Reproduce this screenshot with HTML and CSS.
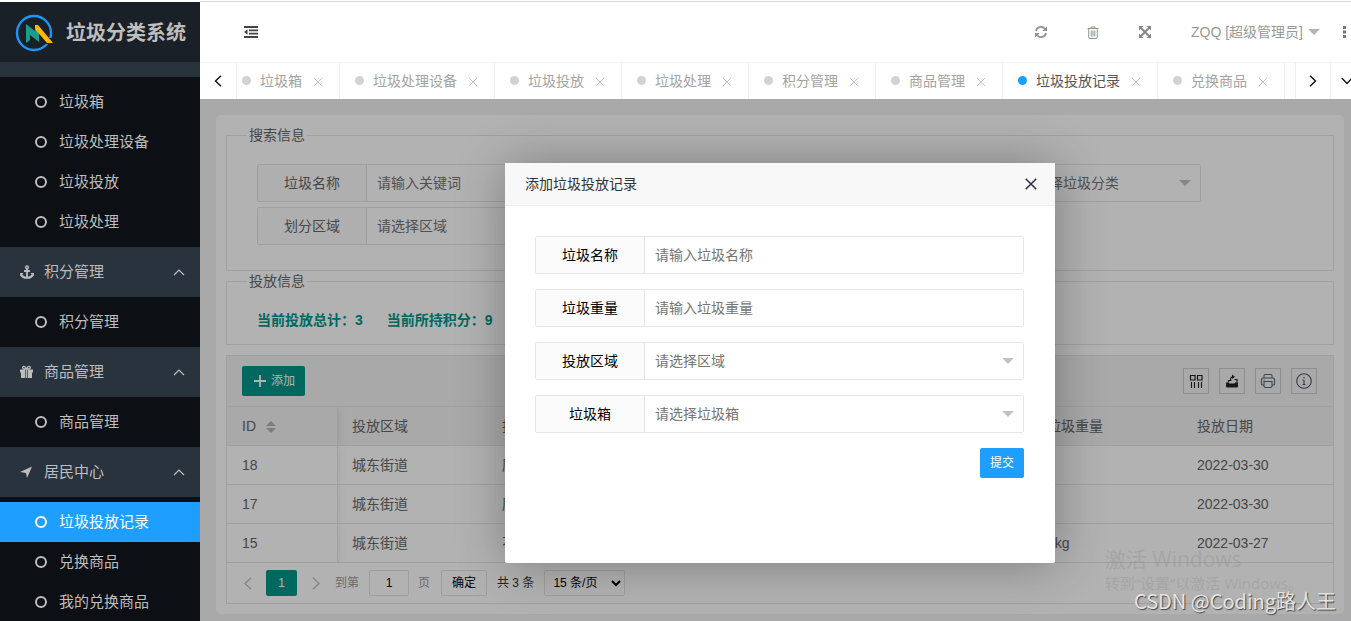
FILE: index.html
```html
<!DOCTYPE html>
<html lang="zh-CN">
<head>
<meta charset="utf-8">
<title>垃圾分类系统</title>
<link rel="stylesheet" href="styles.css">
</head>
<body>
<div class="app">
  <aside class="sidebar">
    <div class="brand">
      <svg class="brand-logo" width="40" height="40" viewBox="0 0 40 40" aria-hidden="true">
        <circle cx="19" cy="20" r="17" fill="none" stroke="#1e96f5" stroke-width="2.400"/>
        <path d="M31 25l6 0 3 6H29z" fill="#1a2027"/>
        <path d="M11 11l9 7v-6l4 4v13L15 22v5l-4 3z" fill="#1a9e8c"/>
        <path d="M20 12h3l15 18h-6L20 16z" fill="#ffb800"/>
      </svg>
      <h1 class="brand-name">垃圾分类系统</h1>
    </div>
    <nav class="menu">
      <div class="menu-cap"></div>
      <ul class="submenu">
        <li><a href="#"><i class="ring"></i>垃圾箱</a></li>
        <li><a href="#"><i class="ring"></i>垃圾处理设备</a></li>
        <li><a href="#"><i class="ring"></i>垃圾投放</a></li>
        <li><a href="#"><i class="ring"></i>垃圾处理</a></li>
      </ul>
      <button class="menu-group" type="button">
        <svg width="14" height="14" viewBox="0 0 14 14" aria-hidden="true"><g fill="none" stroke="currentColor"><circle cx="7" cy="2.3" r="1.4" stroke-width="1.4"/><path d="M7 4v8M4 6h6" stroke-width="1.8"/><path d="M1.2 9.5c1 2.4 3 3.3 5.800 3.300s4.800-.9 5.800-3.300" stroke-width="2"/></g><path d="M0 8l3.500 0L.5 11.500zM14 8l-3.500 0 3 3.500z" fill="currentColor"/></svg>
        <span>积分管理</span>
        <svg class="chev" width="12" height="7" viewBox="0 0 12 7" aria-hidden="true"><path d="M1 6l5-5 5 5" fill="none" stroke="currentColor" stroke-width="1.200"/></svg>
      </button>
      <ul class="submenu">
        <li><a href="#"><i class="ring"></i>积分管理</a></li>
      </ul>
      <button class="menu-group" type="button">
        <svg width="14" height="14" viewBox="0 0 14 14" aria-hidden="true"><path d="M0 4.500h5.200v3H0zM7.800 4.500H13v3H7.800zM1 7h4.200v6H1zM7.800 7H12v6H7.800zM5.900 4.500h1.200V13H5.900z" fill="currentColor"/><path d="M6.300 4C5.500 1.500 4.500 1.200 3.600 1.400c-1.400.4-1.200 2.400.3 2.600zM6.700 4c.8-2.500 1.800-2.800 2.700-2.600 1.400.4 1.200 2.400-.3 2.600z" fill="none" stroke="currentColor" stroke-width="1.300"/></svg>
        <span>商品管理</span>
        <svg class="chev" width="12" height="7" viewBox="0 0 12 7" aria-hidden="true"><path d="M1 6l5-5 5 5" fill="none" stroke="currentColor" stroke-width="1.200"/></svg>
      </button>
      <ul class="submenu">
        <li><a href="#"><i class="ring"></i>商品管理</a></li>
      </ul>
      <button class="menu-group" type="button">
        <svg width="14" height="14" viewBox="0 0 14 14" aria-hidden="true"><path d="M12 1.500L7 13 6 8 0 7z" fill="currentColor"/></svg>
        <span>居民中心</span>
        <svg class="chev" width="12" height="7" viewBox="0 0 12 7" aria-hidden="true"><path d="M1 6l5-5 5 5" fill="none" stroke="currentColor" stroke-width="1.200"/></svg>
      </button>
      <ul class="submenu">
        <li class="current"><a href="#"><i class="ring"></i>垃圾投放记录</a></li>
        <li><a href="#"><i class="ring"></i>兑换商品</a></li>
        <li><a href="#"><i class="ring"></i>我的兑换商品</a></li>
      </ul>
    </nav>
  </aside>

  <div class="main">
    <header class="topbar">
      <button class="icon-btn fold" type="button" aria-label="折叠菜单">
        <svg width="14" height="12" viewBox="0 0 14 12"><path d="M0 0h14v2H0zM5 3.500h9v1.700H5zM5 6.800h9v1.700H5zM0 10h14v2H0zM3.500 3.300v5.400L0 6z" fill="#444"/></svg>
      </button>
      <div class="tools">
        <button class="icon-btn" type="button" aria-label="刷新">
          <svg width="12" height="12" viewBox="0 0 12 12"><g fill="none" stroke="#8f8f8f" stroke-width="1.800"><path d="M1 5a5 5 0 0 1 8.800-2.200"/><path d="M11 7a5 5 0 0 1-8.800 2.200"/></g><path d="M12 .3V5H7.300zM0 11.700V7h4.700z" fill="#8f8f8f"/></svg>
        </button>
        <button class="icon-btn" type="button" aria-label="清除">
          <svg width="12" height="13" viewBox="0 0 12 13"><g fill="none" stroke="#8a9a8a" stroke-width="1"><path d="M.5 2.500h11M4 2.500v-1.500h4v1.500M1.700 2.500v8.500q0 1.500 1.300 1.500h6q1.300 0 1.300-1.500V2.500M4.200 4.500v6M6 4.500v6M7.800 4.500v6"/></g></svg>
        </button>
        <button class="icon-btn" type="button" aria-label="全屏">
          <svg width="12" height="12" viewBox="0 0 12 12"><path d="M0 0h4.500L0 4.500zM12 0v4.500L7.500 0zM0 12V7.500L4.500 12zM12 12H7.500L12 7.500z" fill="#888"/><path d="M1.500 1.500l9 9M10.500 1.500l-9 9" stroke="#888" stroke-width="2"/></svg>
        </button>
        <button class="user" type="button">ZQQ [超级管理员]<i class="caret"></i></button>
        <button class="icon-btn more" type="button" aria-label="更多">
          <svg width="3" height="12" viewBox="0 0 3 12"><path d="M0 0h3v3H0zM0 4.500h3v3H0zM0 9h3v3H0z" fill="#777"/></svg>
        </button>
      </div>
    </header>

    <div class="tabbar">
      <button class="tab-nav first" type="button" aria-label="向左"><svg width="8" height="12" viewBox="0 0 8 12"><path d="M7 .7L1.500 6 7 11.300" fill="none" stroke="#111" stroke-width="1.400"/></svg></button>
      <ul class="tabs">
        <li><i class="dot"></i><a href="#">垃圾箱</a><button class="tab-x" type="button" aria-label="关闭"></button></li>
        <li><i class="dot"></i><a href="#">垃圾处理设备</a><button class="tab-x" type="button" aria-label="关闭"></button></li>
        <li><i class="dot"></i><a href="#">垃圾投放</a><button class="tab-x" type="button" aria-label="关闭"></button></li>
        <li><i class="dot"></i><a href="#">垃圾处理</a><button class="tab-x" type="button" aria-label="关闭"></button></li>
        <li><i class="dot"></i><a href="#">积分管理</a><button class="tab-x" type="button" aria-label="关闭"></button></li>
        <li><i class="dot"></i><a href="#">商品管理</a><button class="tab-x" type="button" aria-label="关闭"></button></li>
        <li class="on"><i class="dot"></i><a href="#">垃圾投放记录</a><button class="tab-x" type="button" aria-label="关闭"></button></li>
        <li><i class="dot"></i><a href="#">兑换商品</a><button class="tab-x" type="button" aria-label="关闭"></button></li>
      </ul>
      <button class="tab-nav" type="button" aria-label="向右"><svg width="8" height="12" viewBox="0 0 8 12"><path d="M1 .7L6.500 6 1 11.300" fill="none" stroke="#111" stroke-width="1.400"/></svg></button>
      <button class="tab-nav last" type="button" aria-label="展开"><svg width="12" height="8" viewBox="0 0 12 8"><path d="M.7 1L6 6.500 11.300 1" fill="none" stroke="#111" stroke-width="1.400"/></svg></button>
    </div>

    <div class="frame">
      <main class="card">
        <fieldset class="panel">
          <legend>搜索信息</legend>
          <form class="search">
            <div class="field"><label for="s-name">垃圾名称</label><input id="s-name" type="text" placeholder="请输入关键词"></div>
            <div class="field"><input type="text" aria-label="用户"></div>
            <div class="field pick"><label for="s-type">垃圾分类</label><select id="s-type"><option>请选择垃圾分类</option></select></div>
            <div class="field pick"><label for="s-area">划分区域</label><select id="s-area"><option>请选择区域</option></select></div>
          </form>
        </fieldset>
        <fieldset class="panel stats">
          <legend>投放信息</legend>
          <p><b>当前投放总计：3</b><b>当前所持积分：9</b></p>
        </fieldset>

        <section class="grid-view">
          <div class="grid-tools">
            <button class="add" type="button"><svg width="12" height="12" viewBox="0 0 12 12" aria-hidden="true"><path d="M6 0v12M0 6h12" stroke="#fff" stroke-width="1.800"/></svg>添加</button>
            <div class="grid-icons">
              <button type="button" aria-label="筛选列"><svg width="16" height="16" viewBox="0 0 16 16"><g fill="none" stroke="#222"><path d="M2.500 2.500h4.500v4.500H2.500zM9.500 2.500h4.500v4.500H9.500z" stroke-width="1.200"/><path d="M3.500 9v6M6.500 9v6M10.500 9v6M13.500 9v6" stroke-width="1.100"/></g></svg></button>
              <button type="button" aria-label="导出"><svg width="16" height="16" viewBox="0 0 16 16"><path d="M2 9.500h2l1.500 1H10l1.500-1H14v4q0 1-1 1H3q-1 0-1-1z" fill="#222"/><path d="M4.500 9.500V7.500h3M6.500 7c0-2.500.5-3 2.500-3.200M10.500 6.500h2.500v3" fill="none" stroke="#222" stroke-width="1.200"/><path d="M8 1.500L11 3.800 8 6z" fill="#222"/></svg></button>
              <button type="button" aria-label="打印"><svg width="16" height="16" viewBox="0 0 16 16"><g fill="none" stroke="#567" stroke-width="1.100"><path d="M4 5V2.500Q4 1.500 5 1.500h6q1 0 1 1V5M4 12H2.500q-1 0-1-1V6.500Q1.500 5 3 5h10q1.500 0 1.500 1.500V11q0 1-1 1H12M4 8.500h8V13q0 1.500-1.500 1.500h-5Q4 14.500 4 13zM3.500 7h1"/></g></svg></button>
              <button type="button" aria-label="说明"><svg width="16" height="16" viewBox="0 0 16 16"><circle cx="8" cy="8" r="7.300" fill="none" stroke="#556" stroke-width="1.100"/><path d="M8 4v1.500M8 7v4.500M6.700 7.200H8M6.500 11.500h3" stroke="#556" stroke-width="1.100"/></svg></button>
            </div>
          </div>
          <table>
            <colgroup><col class="c-id"><col class="c-std"><col class="c-std"><col><col class="c-std"><col class="c-std"></colgroup>
            <thead><tr><th>ID<span class="sort"><i class="up"></i><i class="down"></i></span></th><th>投放区域</th><th>投放垃圾</th><th></th><th>垃圾重量</th><th>投放日期</th></tr></thead>
            <tbody>
              <tr><td>18</td><td>城东街道</td><td>厨余垃圾</td><td></td><td>1</td><td>2022-03-30</td></tr>
              <tr><td>17</td><td>城东街道</td><td>厨余垃圾</td><td></td><td>1</td><td>2022-03-30</td></tr>
              <tr><td>15</td><td>城东街道</td><td>不可回收</td><td></td><td>1kg</td><td>2022-03-27</td></tr>
            </tbody>
          </table>
          <div class="pager">
            <button class="pg" type="button" aria-label="上一页"><svg width="8" height="13" viewBox="0 0 8 13"><path d="M7 .7L1 6.500l6 5.800" fill="none" stroke="#c2c2c2" stroke-width="1.500"/></svg></button>
            <button class="pg cur" type="button">1</button>
            <button class="pg" type="button" aria-label="下一页"><svg width="8" height="13" viewBox="0 0 8 13"><path d="M1 .7l6 5.800-6 5.800" fill="none" stroke="#c2c2c2" stroke-width="1.500"/></svg></button>
            <label class="pg-text" for="pg-no">到第</label><input id="pg-no" type="text" value="1"><span class="pg-text">页</span>
            <button class="go" type="button">确定</button>
            <span class="total">共 3 条</span>
            <select aria-label="每页条数"><option>15 条/页</option></select>
          </div>
        </section>
      </main>

      <div class="shade">
        <div class="dialog" role="dialog" aria-labelledby="dlg-title">
          <div class="dialog-head">
            <h2 id="dlg-title">添加垃圾投放记录</h2>
            <button class="dialog-x" type="button" aria-label="关闭"><svg width="12" height="12" viewBox="0 0 12 12"><path d="M.7.7l10.600 10.600M11.300.7L.7 11.300" stroke="#2e2d3c" stroke-width="1.500"/></svg></button>
          </div>
          <form class="dialog-form">
            <div class="field"><label for="d-name">垃圾名称</label><input id="d-name" type="text" placeholder="请输入垃圾名称"></div>
            <div class="field"><label for="d-weight">垃圾重量</label><input id="d-weight" type="text" placeholder="请输入垃圾重量"></div>
            <div class="field pick"><label for="d-area">投放区域</label><select id="d-area"><option>请选择区域</option></select></div>
            <div class="field pick"><label for="d-bin">垃圾箱</label><select id="d-bin"><option>请选择垃圾箱</option></select></div>
            <button class="submit" type="button">提交</button>
          </form>
        </div>
      </div>
    </div>
  </div>
</div>
<div class="activate"><p class="activate-title">激活 Windows</p><p>转到“设置”以激活 Windows。</p></div>
<div class="credit">CSDN @Coding路人王</div>
</body>
</html>
```
FILE: styles.css
```css
* { box-sizing: border-box; }
html, body { height: 100%; }
body, h1, h2, p, ul, fieldset { margin: 0; padding: 0; }
body {
  overflow: hidden;
  background: #fff;
  color: #666;
  font: 14px/24px "Liberation Sans", "Noto Sans CJK SC", sans-serif;
}
ul { list-style: none; }
a { color: inherit; text-decoration: none; }
button, input, select { font: inherit; color: inherit; }
button { border: 0; padding: 0; background: none; cursor: pointer; }
svg { display: block; flex: none; }

.app {
  display: flex;
  height: 100vh;
  padding-top: 1px;
}

/* Sidebar */
.sidebar {
  flex: none;
  width: 200px;
  margin-top: 1px;
  overflow: hidden;
  background: #0c0f13;
  color: #bebebe;
}
.brand {
  display: flex;
  align-items: center;
  gap: 11px;
  height: 60px;
  padding: 2px 0 0 15px;
  background: #1a2027;
}
.brand-name { font-size: 20px; line-height: 30px; white-space: nowrap; }
.menu-cap { height: 15px; background: #28333e; }
.submenu { padding: 5px 0; background: #0c0f13; }
.submenu a {
  display: flex;
  align-items: center;
  gap: 12px;
  height: 40px;
  padding-left: 35px;
  font-size: 15px;
}
.ring {
  width: 12px;
  height: 12px;
  border: 2px solid currentColor;
  border-radius: 50%;
}
.current { background: #1e9fff; color: #fff; }
.menu-group {
  display: flex;
  align-items: center;
  gap: 10px;
  width: 100%;
  height: 50px;
  padding: 0 15px 0 20px;
  background: #28333e;
  font-size: 15px;
}
.chev { margin-left: auto; }

/* Top bar */
.main {
  flex: 1;
  min-width: 0;
  display: flex;
  flex-direction: column;
  border-top: 1px solid #d5dbda;
}
.topbar {
  display: flex;
  align-items: center;
  justify-content: space-between;
  height: 60px;
  padding-left: 44px;
}
.tools { display: flex; align-items: center; gap: 40px; color: #999; }
.user { display: flex; align-items: center; gap: 5px; margin-right: -17px; white-space: nowrap; }
.caret { border: 6px solid transparent; border-top-color: #b5b5b5; border-bottom: 0; }
.more { margin-right: 5px; }

/* Tab bar */
.tabbar {
  display: flex;
  height: 37px;
  border-top: 1px solid #f3f3f3;
}
.tab-nav {
  flex: none;
  display: flex;
  align-items: center;
  justify-content: center;
  width: 35px;
  padding-bottom: 1px;
  border-left: 1px solid #f0f0f0;
}
.tab-nav.first { width: 37px; border-left: 0; border-right: 1px solid #f0f0f0; }
.tab-nav.last { width: 21px; justify-content: flex-start; overflow: hidden; padding-left: 10px; }
.tabs { flex: 1; display: flex; min-width: 0; overflow: hidden; color: #a3a3a3; }
.tabs li {
  flex: none;
  display: flex;
  align-items: center;
  padding: 0 17px 1px 15px;
  border-right: 1px solid #f0f0f0;
}
.tabs li:first-child { margin-left: -10px; }
.dot { width: 9px; height: 9px; margin-right: 9px; border-radius: 50%; background: #d2d2d2; }
.tab-x {
  width: 8px;
  height: 8px;
  margin: 2px 0 0 12px;
  background:
    linear-gradient(45deg, transparent 45%, #c4c4c4 45%, #c4c4c4 55%, transparent 55%),
    linear-gradient(-45deg, transparent 45%, #c4c4c4 45%, #c4c4c4 55%, transparent 55%);
}
.on { color: #555; }
.on .dot { background: #1e9fff; }

/* Page body */
.frame {
  position: relative;
  flex: 1;
  overflow: hidden;
  padding: 16px 7px 8px 16px;
  background: #f2f2f2;
}
.card { padding: 10px; border-radius: 5px; background: #fff; }
.panel { min-width: 0; padding: 19px 10px 25px 30px; border: 1px solid #e6e6e6; }
.panel legend { margin-left: -10px; padding: 0 2px; line-height: 20px; }
.stats { padding: 17px 10px 12px 30px; }
.stats p { display: flex; gap: 24px; color: #009688; }
.search { display: flex; flex-wrap: wrap; gap: 5px 22px; }
.search .field { width: 300px; }

.field {
  position: relative;
  display: flex;
  height: 38px;
  border: 1px solid #e6e6e6;
  border-radius: 2px;
}
.field label {
  flex: none;
  width: 109px;
  border-right: 1px solid #e6e6e6;
  background: #fbfbfb;
  line-height: 36px;
  text-align: center;
}
.field input, .field select {
  flex: 1;
  min-width: 0;
  padding: 0 10px;
  border: 0;
  background: #fff;
  color: #757575;
  appearance: none;
}
.field input::placeholder { color: #757575; }
.pick::after {
  content: "";
  position: absolute;
  right: 9px;
  top: 15px;
  border: 6px solid transparent;
  border-top-color: #c2c2c2;
  border-bottom: 0;
  pointer-events: none;
}

/* Data grid */
.grid-view { margin-top: 10px; border: 1px solid #e6e6e6; }
.grid-tools {
  display: flex;
  align-items: center;
  justify-content: space-between;
  height: 51px;
  padding: 0 16px 0 15px;
  border-bottom: 1px solid #e6e6e6;
  background: #f2f2f2;
}
.add {
  display: flex;
  align-items: center;
  gap: 5px;
  height: 30px;
  padding: 0 10px 0 12px;
  border-radius: 2px;
  background: #009688;
  color: #fff;
  font-size: 12px;
}
.grid-icons { display: flex; gap: 10px; }
.grid-icons button {
  display: flex;
  align-items: center;
  justify-content: center;
  width: 26px;
  height: 26px;
  border: 1px solid #ccc;
}
table { width: 100%; border-collapse: separate; border-spacing: 0; table-layout: fixed; }
.c-id { width: 111px; }
.c-std { width: 150px; }
th, td {
  height: 39px;
  padding: 0 14px;
  border-bottom: 1px solid #e6e6e6;
  font-weight: 400;
  text-align: left;
  white-space: nowrap;
}
th { background: #f2f2f2; }
th:first-child, td:first-child {
  padding-left: 15px;
  border-right: 1px solid #e6e6e6;
  box-shadow: 1px 0 8px rgba(0, 0, 0, .08);
  clip-path: inset(0 -9px 0 0);
}
.sort { display: inline-flex; flex-direction: column; gap: 2px; margin-left: 10px; vertical-align: middle; }
.sort i { border: 5px solid transparent; }
.sort .up { border-top: 0; border-bottom-color: #b2b2b2; }
.sort .down { border-bottom: 0; border-top-color: #b2b2b2; }

.pager {
  display: flex;
  align-items: center;
  height: 40px;
  padding-left: 10px;
  color: #333;
  font-size: 12px;
}
.pg { display: flex; align-items: center; justify-content: center; width: 21px; height: 26px; }
.cur { width: 31px; margin: 0 8px; border-radius: 2px; background: #009688; color: #fff; }
.pg-text { margin-left: 9px; color: #999; }
.pager input {
  width: 40px;
  height: 26px;
  margin-left: 10px;
  border: 1px solid #e2e2e2;
  border-radius: 2px;
  background: #fff;
  color: #000;
  text-align: center;
}
.go { width: 46px; height: 26px; margin: 0 10px 0 11px; border: 1px solid #e2e2e2; border-radius: 2px; color: #000; }
.pager select {
  width: 81px;
  height: 26px;
  margin-left: 10px;
  padding-left: 4px;
  border: 1px solid #e2e2e2;
  border-radius: 2px;
  background: #fff;
  color: #000;
}

/* Dialog */
.shade {
  position: absolute;
  inset: 0;
  display: grid;
  place-items: center;
  padding: 6px 0 0 9px;
  background: rgba(0, 0, 0, .3);
}
.dialog {
  width: 550px;
  min-height: 400px;
  border-radius: 2px;
  background: #fff;
  box-shadow: 1px 1px 50px rgba(0, 0, 0, .3);
}
.dialog-head {
  display: flex;
  align-items: center;
  justify-content: space-between;
  height: 43px;
  padding: 0 18px 0 20px;
  border-bottom: 1px solid #eee;
  background: #f8f8f8;
  color: #333;
}
.dialog-head h2 { font-size: 14px; font-weight: 400; }
.dialog-form {
  display: flex;
  flex-direction: column;
  gap: 15px;
  padding: 30px 31px 15px 30px;
  color: #000;
}
.submit {
  align-self: flex-end;
  width: 44px;
  height: 30px;
  border-radius: 2px;
  background: #1e9fff;
  color: #fff;
  font-size: 12px;
}

/* Overlaid marks */
.activate {
  position: absolute;
  right: 48px;
  bottom: 26px;
  color: rgba(140, 140, 140, .35);
  font-family: "Open Sans", "Noto Sans CJK SC", sans-serif;
  font-size: 15px;
  pointer-events: none;
}
.activate-title { font-size: 21px; }
.credit {
  position: absolute;
  right: 15px;
  bottom: 8px;
  color: #e4e4e4;
  font-family: "Noto Sans CJK SC", sans-serif;
  font-size: 20px;
  text-shadow: 1px 1px 1px #444;
  pointer-events: none;
}
```
